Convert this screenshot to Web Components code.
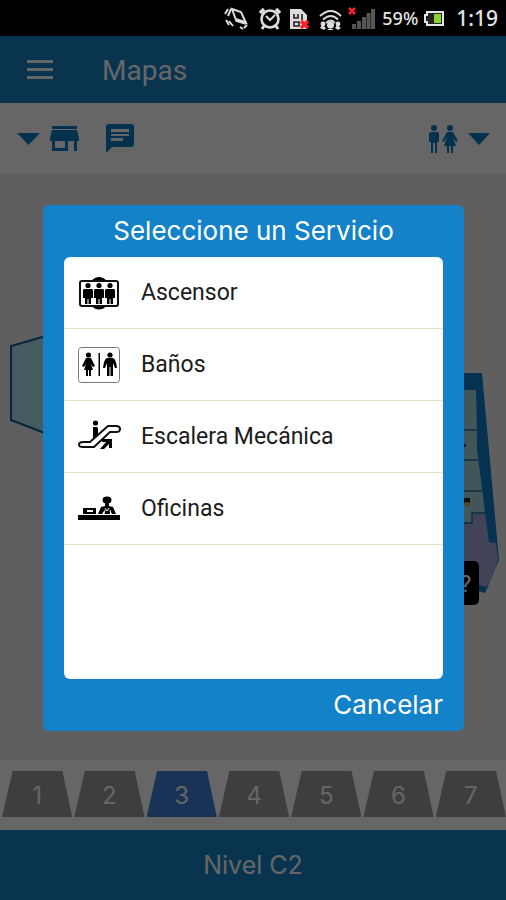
<!DOCTYPE html>
<html lang="es">
<head>
<meta charset="utf-8">
<meta name="viewport" content="width=device-width, initial-scale=1">
<title>Mapas</title>
<style>
html, body { margin: 0; height: 100%; }
body { font-family: Roboto, "Noto Sans", sans-serif; --blue: #1482c8; --display: Inter, "Noto Sans", sans-serif; }
</style>
</head>
<body>
<map-app></map-app>

<template id="t-app">
<style>
:host { display: flex; flex-direction: column; min-height: 100%; background: #fff; }
.stage { position: relative; flex: 1; display: flex; flex-direction: column; }
floor-map { flex: 1; }
.shade { position: absolute; inset: 0; background: rgba(0,0,0,.6); display: grid; align-items: center; padding: 0 42px 0 43px; }
</style>
<status-bar></status-bar>
<div class="stage">
  <app-header>Mapas</app-header>
  <filter-bar></filter-bar>
  <floor-map></floor-map>
  <level-tabs levels="7" current="3"></level-tabs>
  <level-footer>Nivel C2</level-footer>
  <div class="shade">
    <service-dialog>
      <span slot="title">Seleccione un Servicio</span>
      <service-item icon="lift">Ascensor</service-item>
      <service-item icon="toilets">Baños</service-item>
      <service-item icon="escalator">Escalera Mecánica</service-item>
      <service-item icon="office">Oficinas</service-item>
      <span slot="action">Cancelar</span>
    </service-dialog>
  </div>
</div>
</template>

<template id="t-status">
<style>
:host { display: flex; align-items: center; justify-content: flex-end; height: 36px; padding-right: 8px; background: #000; color: #e4e4e4; font-family: "Noto Sans", sans-serif; font-weight: 500; }
svg { display: block; height: 28px; width: 158px; }
.bat { width: 22px; margin: 0 11px 0 5px; }
.pct { font-size: 18px; }
.time { font-size: 21px; }
</style>
<svg viewBox="0 0 158 28" fill="none" stroke="#ddd" stroke-width="2">
  <g stroke-width="2"><path d="M8 5l9 3 5 11-10-3z"/><path d="M12 16l10 3" stroke-width="3.500"/><path d="M1 10l3-5M4 12l3-7M20 24l3-3M16 23l3 2M5 17l4 5M2 16l3 5"/></g>
  <g transform="translate(46 15)"><circle r="8.5" stroke-width="2.6"/><path d="M-4-3L0 1l5-5"/><path d="M-10-6l4-4M10-6l-4-4" stroke-width="3.4"/><path d="M-6 7l-2 3M6 7l2 3" stroke-width="3"/></g>
  <path d="M66 5h11l6 6v14H66z" fill="#ddd" stroke="none"/><path d="M70 10v4h4v-4M78 10v6M70 18h5v4h-5z" stroke="#222" stroke-width="1.6"/><path d="M77 17l7 7m0-7l-7 7" stroke="#f22" stroke-width="3.4"/>
  <path d="M96 12q11-10 21 0M99 15.500q8-7 15 0"/><path d="M102 19q5-5 9 0" stroke-width="1.8"/><g fill="#ddd" stroke="none"><circle cx="106.500" cy="21" r="3.500"/><circle cx="99" cy="20" r="2.400"/><circle cx="114" cy="20" r="2.400"/><path d="M103 26q3-3 7 0zM96 24l2-3 4 3-2 2zM111 24l2-3 4 3-3 2z"/></g>
  <path d="M125 4l6 6m0-6l-6 6" stroke="#f22" stroke-width="2.600"/>
  <g fill="#555" stroke="none"><path d="M128 20h4v5h-4zM133 17h4v8h-4zM138 13h4v12h-4zM142.500 9h4v16h-4zM147 5h4v20h-4z"/></g>
</svg>
<span class="pct">59%</span>
<svg class="bat" viewBox="0 0 22 28"><path d="M4 8h16v13H4v-3H2v-7h2z" fill="#222" stroke="#e4e4e4" stroke-width="2"/><path d="M11 10h7v9h-7z" fill="#8bd52a"/></svg>
<span class="time">1:19</span>
</template>

<template id="t-header">
<style>
:host { display: flex; align-items: center; height: 67px; padding-left: 20px; background: var(--blue); color: #fff; }
button { border: 0; background: none; padding: 6px; width: 40px; height: 40px; }
svg { display: block; }
h1 { margin: 0 0 0 42px; padding-top: 2px; font-size: 28px; font-weight: 400; line-height: 34px; }
</style>
<button aria-label="Menú"><svg width="28" height="28" viewBox="0 0 28 28" fill="#fff"><path d="M1 4h26v3H1zM1 12h26v3H1zM1 20h26v3H1z"/></svg></button>
<h1><slot></slot></h1>
</template>

<template id="t-filter">
<style>
:host { display: flex; align-items: center; justify-content: space-between; height: 71px; padding: 0 16px 0 17px; background: #fff; box-sizing: border-box; }
div { display: flex; gap: 26px; }
button { display: flex; align-items: center; gap: 10px; border: 0; padding: 0; background: none; }
svg { display: block; fill: #0c7dc4; }
</style>
<div>
  <button aria-label="Tiendas">
    <svg width="23" height="12" viewBox="0 0 23 12"><path d="M0 0h23L11.500 12z"/></svg>
    <svg width="29" height="30" viewBox="0 0 29 30"><path d="M2 2h25v3H2zM2 6h25l2 8v3h-2v10h-3V17h-6v10H2V17H0v-3zM5 17v7h10v-7z" fill-rule="evenodd"/></svg>
  </button>
  <button aria-label="Mensajes">
    <svg width="30" height="30" viewBox="0 0 30 30"><path d="M4 0h22q3 0 3 3v17q0 3-3 3H7l-6 6V3q0-3 3-3zM6 5v3h18V5zm0 5v2h18v-2zm0 4v3h12v-3z" fill-rule="evenodd"/></svg>
  </button>
</div>
<button aria-label="Servicios">
  <svg width="30" height="30" viewBox="0 0 30 30"><circle cx="6" cy="4" r="3"/><path d="M3 8h7q1 0 1 2v8H9v11H7V19H5v10H3V18H1v-8q0-2 2-2z"/><circle cx="22" cy="4" r="3"/><path d="M19 8h6l5 9-2 1-3-5 3 9h-3v7h-2v-7h-2v7h-2v-7h-3l3-9-3 5-2-1z"/></svg>
  <svg width="22" height="12" viewBox="0 0 22 12"><path d="M0 0h22L11 12z"/></svg>
</button>
</template>

<template id="t-map">
<style>
:host { display: block; position: relative; min-height: 540px; background: #eee; }
svg { position: absolute; inset: 0; width: 100%; height: 100%; }
text { font-family: Roboto, sans-serif; font-size: 24px; }
</style>
<svg viewBox="0 0 506 586" preserveAspectRatio="xMidYMid slice" role="img" aria-label="Plano del nivel">
  <path d="M60 158L11 172v74l49 19z" fill="#aae4ee" stroke="#0e5e98" stroke-width="2"/>
  <path d="M440 199h42l17 187-14 33-45-12z" fill="#0c7dc8"/>
  <path d="M440 216h36l1 60 8 63 4 29 7 1 2 17-7 20-5 7-46-14z" fill="#a6a8d8"/>
  <path d="M440 216h36l1 60 8 63h-13v10h-32z" fill="#a6d8de"/>
  <path d="M440 256h36M440 286h38M440 317h42M464 349h8v-10h13" fill="none" stroke="#1a74a8" stroke-width="1.500"/>
  <path d="M464 324h6v5h-6z" fill="#222"/><path d="M465 328h4v4h-4z" fill="#f90"/><path d="M464 270h2v3h-2z" fill="#246"/>
  <rect x="440" y="387" width="39" height="44" rx="5"/>
  <text x="460" y="418" fill="#fff">?</text>
</svg>
</template>

<template id="t-tabs">
<style>
:host { display: flex; gap: 2px; height: 46px; padding: 11px 0 13px 2px; background: #fff; }
button { flex: 1; border: 0; padding: 4px 0 0; background: #9b9b9b; color: #fff; font: 24px/28px Inter, sans-serif; clip-path: polygon(15% 0, 86% 0, 100% 100%, 0 100%); }
button[aria-current] { background: #3c7fd6; }
</style>
</template>

<template id="t-footer">
<style>
:host { display: grid; place-items: center; height: 70px; background: var(--blue); color: #fff; font: 25px/32px var(--display); }
</style>
<span><slot></slot></span>
</template>

<template id="t-dialog">
<style>
:host { display: block; }
section { display: flex; flex-direction: column; background: var(--blue); color: #fff; border-radius: 6px; padding: 0 21px; font-family: var(--display); }
h2 { margin: 0; height: 52px; line-height: 52px; text-align: center; font-size: 26px; font-weight: 400; }
ul { margin: 0; padding: 0; height: 422px; overflow: auto; background: #fff; border-radius: 6px; font-family: Roboto, sans-serif; }
button { align-self: flex-end; border: 0; padding: 0; background: none; color: inherit; height: 52px; font: 26px/52px var(--display); }
</style>
<section role="dialog" aria-labelledby="h">
  <h2 id="h"><slot name="title"></slot></h2>
  <ul role="list"><slot></slot></ul>
  <button><slot name="action"></slot></button>
</section>
</template>

<template id="t-item">
<style>
:host { display: block; border-bottom: 1px solid #dde6c8; }
button { display: flex; align-items: center; gap: 20px; width: 100%; height: 71px; padding: 0 13px; border: 0; background: none; color: #1c1c1c; font: 23px/28px Roboto, sans-serif; text-align: left; }
svg { display: block; flex: none; }
</style>
<button><svg width="44" height="40" viewBox="0 0 44 40"></svg><slot></slot></button>
</template>

<script>
const man = x => `<g transform="translate(${x} 0)"><circle cx="0" cy="12.500" r="2.600"/><path d="M-4 16h8q1 0 1 2v7h-2v6H.5v-5h-1v5H-3v-6h-2v-7q0-2 1-2z"/></g>`;
const icons = {
  lift: `<path d="M14 8q8-8 16 0zM14 33q8 7 16 0z"/><rect x="3" y="8" width="38" height="25" rx="2" fill="none" stroke="#111" stroke-width="2"/>${man(11)}${man(22)}${man(33)}`,
  toilets: `<rect x="1.500" y="2.500" width="41" height="35" rx="3" fill="#fff" stroke="#777"/><path d="M21.500 8H23v23h-1.500z"/>
    <circle cx="11.500" cy="10" r="2.600"/><path d="M9 13h5l4 8-2 1-2-3 2 6h-2v6h-2v-6h-1v6H9v-6H7l2-6-2 3-2-1z"/>
    <circle cx="33" cy="10" r="2.600"/><path d="M30 13h6q3 1 4 10h-2l-2-5v13h-2.500v-9h-1v9H30V18l-2 5h-2q1-9 4-10z"/>`,
  escalator: `<circle cx="18.500" cy="6" r="2.600"/><path d="M16 10h4q1 0 1 2v6l-5 5z"/><path d="M6 25h7L31 9h8q4 0 4 3t-4 3h-6L17 30H6q-4 0-4-2.500T6 25z" fill="none" stroke="#111" stroke-width="2"/><path d="M25 22h10v9h-3v-4l-5 5h-4l6-7h-4z"/>`,
  office: `<path d="M1 26h42v5H1zM6 19h13v6H6z"/><path d="M10 21h6v2h-6z" fill="#fff"/><ellipse cx="30" cy="11" rx="4.500" ry="3.500"/><path d="M28 14h4v3l4 1 3 7h-4l-2-3v3h-6v-3l-2 3h-4l3-7 4-1z"/><path d="M28 19l2 3 2-3M27 25l1-4M34 25l-1-4" stroke="#fff" fill="none"/>`
};

class Part extends HTMLElement {
  constructor() {
    super();
    this.attachShadow({ mode: "open" })
      .append(document.getElementById(this.constructor.template).content.cloneNode(true));
  }
}
const define = (name, template) =>
  customElements.define(name, class extends Part { static template = template; });

customElements.define("level-tabs", class extends Part {
  static template = "t-tabs";
  connectedCallback() {
    for (let n = 1; n <= Number(this.getAttribute("levels")); n++) {
      const b = document.createElement("button");
      b.textContent = n;
      if (String(n) === this.getAttribute("current")) b.setAttribute("aria-current", "true");
      this.shadowRoot.append(b);
    }
  }
});
customElements.define("service-item", class extends Part {
  static template = "t-item";
  connectedCallback() {
    this.setAttribute("role", "listitem");
    this.shadowRoot.querySelector("svg").innerHTML = icons[this.getAttribute("icon")];
  }
});
define("status-bar", "t-status");
define("app-header", "t-header");
define("filter-bar", "t-filter");
define("floor-map", "t-map");
define("level-footer", "t-footer");
define("service-dialog", "t-dialog");
define("map-app", "t-app");
</script>
</body>
</html>
